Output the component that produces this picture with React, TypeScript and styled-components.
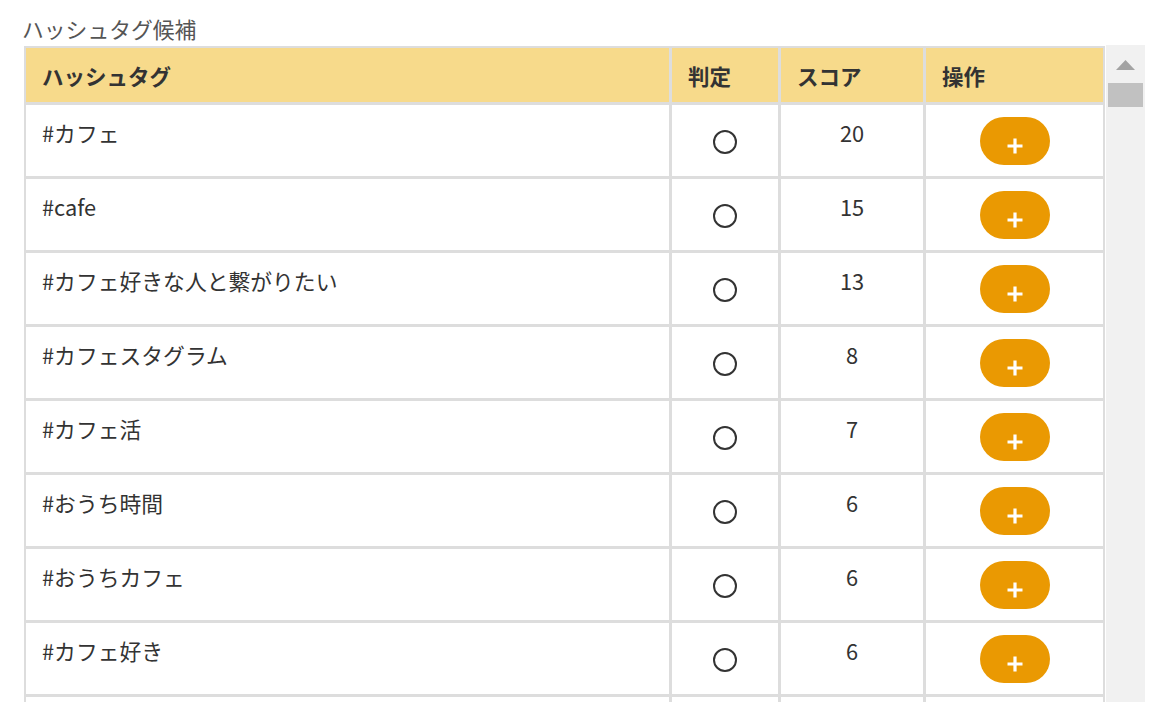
import React from 'react'
import styled, { createGlobalStyle } from 'styled-components'

const GlobalStyle = createGlobalStyle`
  html, body {
    margin: 0;
    padding: 0;
    background: #ffffff;
  }
  body {
    font-family: 'Noto Sans CJK JP', 'Noto Sans', sans-serif;
    color: #333333;
  }
`

interface Candidate {
  tag: string
  score: number
}

const candidates: Candidate[] = [
  { tag: '#カフェ', score: 20 },
  { tag: '#cafe', score: 15 },
  { tag: '#カフェ好きな人と繋がりたい', score: 13 },
  { tag: '#カフェスタグラム', score: 8 },
  { tag: '#カフェ活', score: 7 },
  { tag: '#おうち時間', score: 6 },
  { tag: '#おうちカフェ', score: 6 },
  { tag: '#カフェ好き', score: 6 },
  { tag: '#カフェ巡り', score: 5 },
]

const columns = '643px 106px 142px 177px'

export default function App() {
  return (
    <>
      <GlobalStyle />
      <Page>
        <Title>ハッシュタグ候補</Title>
        <ScrollBox>
          <Viewport>
            <Table>
              <Row>
                <HeadCell>ハッシュタグ</HeadCell>
                <HeadCell>判定</HeadCell>
                <HeadCell>スコア</HeadCell>
                <HeadCell>操作</HeadCell>
              </Row>
              {candidates.map((c) => (
                <Row key={c.tag}>
                  <TagCell>{c.tag}</TagCell>
                  <JudgeCell>
                    <Mark />
                  </JudgeCell>
                  <ScoreCell>{c.score}</ScoreCell>
                  <ActionCell>
                    <AddButton type='button' aria-label='追加'>
                      <svg width='16' height='16' viewBox='0 0 16 16'>
                        <path
                          d='M8 0.5v15M0.5 8h15'
                          stroke='#ffffff'
                          strokeWidth='3.2'
                          fill='none'
                        />
                      </svg>
                    </AddButton>
                  </ActionCell>
                </Row>
              ))}
            </Table>
          </Viewport>
          <ScrollTrack>
            <ScrollArrow>
              <svg width='19' height='10' viewBox='0 0 19 10'>
                <polygon points='9.5,0 19,10 0,10' fill='#a3a3a3' />
              </svg>
            </ScrollArrow>
            <ScrollThumb />
          </ScrollTrack>
        </ScrollBox>
      </Page>
    </>
  )
}

const Page = styled.div`
  padding: 13px 7px 0 22px;
  display: flex;
  flex-direction: column;
`

const Title = styled.h1`
  margin: 0;
  font-size: 21.8px;
  font-weight: normal;
  line-height: 32px;
  color: #555555;
`

const ScrollBox = styled.div`
  display: flex;
  height: 657px;
  margin-left: 2px;
`

const Viewport = styled.div`
  flex: 1;
  overflow: hidden;
  padding-top: 1px;
`

const Table = styled.div`
  display: flex;
  flex-direction: column;
  gap: 3px;
  width: max-content;
  padding: 2px;
  background: #dddddd;
`

const Row = styled.div`
  display: grid;
  grid-template-columns: ${columns};
  gap: 3px;
`

const HeadCell = styled.div`
  height: 54px;
  display: flex;
  align-items: center;
  padding: 0 16px;
  background: #f7da8b;
  font-size: 21.5px;
  font-weight: bold;
  color: #333333;
`

const BodyCell = styled.div`
  height: 71px;
  box-sizing: border-box;
  background: #ffffff;
  font-size: 21.8px;
  line-height: 31px;
  color: #333333;
`

const TagCell = styled(BodyCell)`
  padding: 12px 16px 0;
`

const ScoreCell = styled(BodyCell)`
  padding-top: 12px;
  text-align: center;
`

const JudgeCell = styled(BodyCell)`
  display: flex;
  align-items: center;
  justify-content: center;
  padding-top: 3px;
`

const Mark = styled.span`
  width: 20px;
  height: 20px;
  border: 2px solid #333333;
  border-radius: 50%;
`

const ActionCell = styled(BodyCell)`
  display: flex;
  align-items: center;
  justify-content: center;
  padding-top: 1px;
`

const AddButton = styled.button`
  width: 70px;
  height: 48px;
  border: none;
  border-radius: 24px;
  background: #ea9902;
  padding: 9px 0 0;
  display: flex;
  align-items: center;
  justify-content: center;
  cursor: pointer;
`

const ScrollTrack = styled.div`
  width: 39px;
  margin-left: 1px;
  background: #f1f1f1;
  display: flex;
  flex-direction: column;
  align-items: center;
`

const ScrollArrow = styled.div`
  height: 38px;
  width: 100%;
  display: flex;
  align-items: center;
  justify-content: center;
  padding-top: 2px;
  box-sizing: border-box;
`

const ScrollThumb = styled.div`
  width: 35px;
  height: 24px;
  background: #c1c1c1;
`
